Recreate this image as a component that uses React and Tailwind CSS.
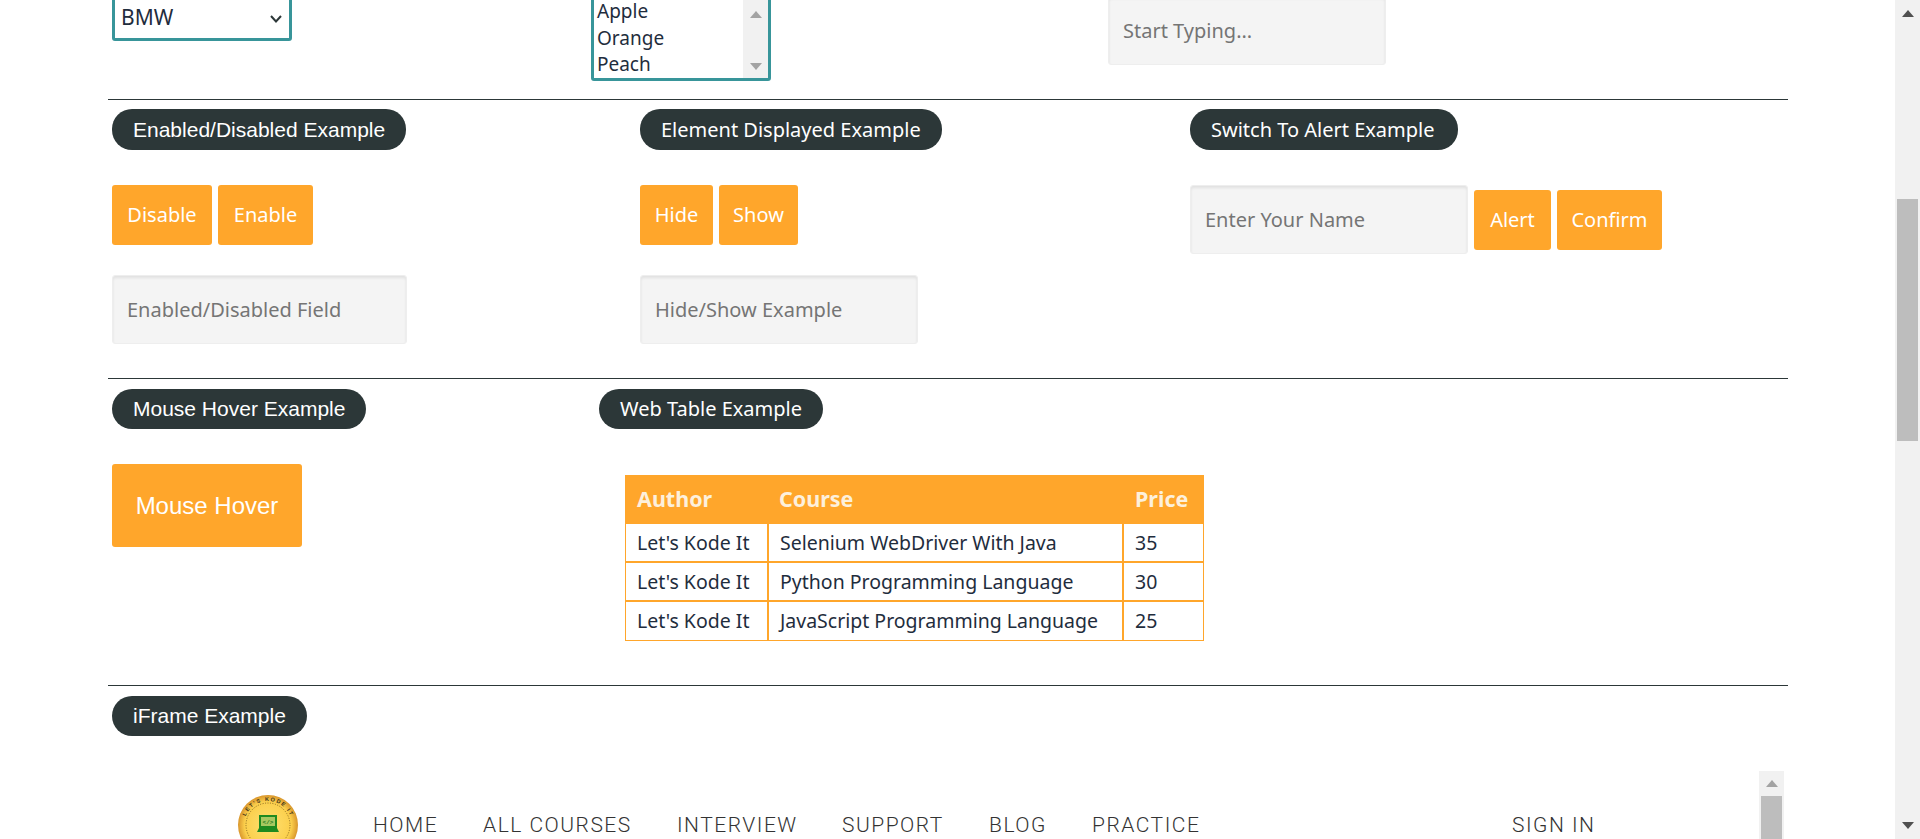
const TREBUCHET = "font-['Noto_Sans',sans-serif]";
const ARIAL = "font-['Liberation_Sans',sans-serif]";

function Arrow({ up, className }) {
    return (
        <svg width="12" height="7" viewBox="0 0 12 7" className={className}>
            <path d={up ? "M0 7 L6 0 L12 7 Z" : "M0 0 L6 7 L12 0 Z"} fill="currentColor" />
        </svg>
    );
}

function Pill({ children, className = "", arial }) {
    return (
        <div
            className={`flex items-center whitespace-nowrap rounded-[20px] bg-[#2c3738] text-white pl-[21px] ${arial ? `${ARIAL} text-[21px]` : `${TREBUCHET} text-[20px]`} ${className}`}
        >
            {children}
        </div>
    );
}

function OrangeButton({ children, className = "" }) {
    return (
        <button className={`h-[60px] rounded-[3px] bg-[#ffa62b] text-white text-[20px] ${TREBUCHET} ${className}`}>
            {children}
        </button>
    );
}

function Field({ placeholder, className = "" }) {
    return (
        <input
            placeholder={placeholder}
            className={`h-[69px] rounded-[3px] border border-[#eeeeee] bg-[#f4f4f4] px-[14px] text-[20px] placeholder:text-[#757575] shadow-[inset_0_2px_3px_rgba(0,0,0,0.08)] ${TREBUCHET} ${className}`}
        />
    );
}

function Rule() {
    return <hr className="border-0 h-px bg-[#2c3738]" />;
}

const courses = [
    ["Let's Kode It", "Selenium WebDriver With Java", "35"],
    ["Let's Kode It", "Python Programming Language", "30"],
    ["Let's Kode It", "JavaScript Programming Language", "25"],
];

function Logo() {
    return (
        <svg width="60" height="60" viewBox="0 0 60 60">
            <defs>
                <radialGradient id="coin">
                    <stop offset="0%" stopColor="#ffe070" />
                    <stop offset="78%" stopColor="#fbcf4c" />
                    <stop offset="100%" stopColor="#d9962c" />
                </radialGradient>
                <path id="ring" d="M6 30 A24 24 0 0 1 54 30" />
            </defs>
            <circle cx="30" cy="30" r="30" fill="url(#coin)" />
            <circle cx="30" cy="30" r="22" fill="none" stroke="#8a6a20" strokeWidth="1" strokeDasharray="1 1.5" />
            <text fontSize="5.5" fontWeight="700" fill="#3a3018" letterSpacing="1.4" fontFamily="Liberation Sans, sans-serif">
                <textPath href="#ring" startOffset="12%">LET'S KODE IT</textPath>
            </text>
            <rect x="21" y="20" width="18" height="13" fill="#1f8a1f" />
            <rect x="23" y="22" width="14" height="9" fill="#a8c860" />
            <text x="30" y="29" fontSize="6" fontWeight="700" fill="#1f7a1f" textAnchor="middle" fontFamily="Liberation Mono, monospace">&lt;/&gt;</text>
            <path d="M19 37 L21 33 H39 L41 37 Z" fill="#1f8a1f" />
        </svg>
    );
}

const navItems = [
    ["HOME", "w-[110px]"],
    ["ALL COURSES", "w-[194px]"],
    ["INTERVIEW", "w-[165px]"],
    ["SUPPORT", "w-[147px]"],
    ["BLOG", "w-[103px]"],
    ["PRACTICE", "w-[420px]"],
    ["SIGN IN", ""],
];

export default function App() {
    return (
        <div className="flex h-[839px] overflow-hidden bg-white text-[#1f2d3d]">
            <main className="flex-1 min-w-0">
                <div className="ml-[108px] w-[1680px]">
                    {/* Dropdown row, scrolled partly out of view */}
                    <div className={`-mt-[12px] h-[111px] flex items-start px-[4px] ${TREBUCHET}`}>
                        <div className="w-[479px]">
                            <div className="relative w-[180px]">
                                <select className="block w-full h-[53px] appearance-none rounded-[3px] border-[3px] border-[#38959a] pl-[6px] pt-[6px] text-[21px] bg-white">
                                    <option>BMW</option>
                                </select>
                                <svg width="12" height="8" viewBox="0 0 12 8" className="absolute left-[158px] top-[27px] text-[#2c3738] pointer-events-none">
                                    <path d="M1 1 L6 6.5 L11 1" fill="none" stroke="currentColor" strokeWidth="2" />
                                </svg>
                            </div>
                        </div>
                        <div className="w-[517px]">
                            <div className="flex w-[180px] h-[93px] rounded-[3px] border-[3px] border-[#38959a] text-[19px] leading-[22px]">
                                <ul className="flex-1 pl-[3px] pt-[9px] flex flex-col gap-[4.5px]">
                                    <li>Apple</li>
                                    <li>Orange</li>
                                    <li>Peach</li>
                                </ul>
                                <div className="w-[25px] bg-[#f1f1f1] flex flex-col items-center justify-between text-[#a3a3a3] pt-[20px] pb-[8px]">
                                    <Arrow up />
                                    <Arrow />
                                </div>
                            </div>
                        </div>
                        <Field placeholder="Start Typing..." className="w-[278px] mt-[8px]" />
                    </div>
                    <Rule />

                    {/* Enabled / displayed / alert */}
                    <div className="h-[278px] flex px-[4px] pt-[9px]">
                        <div className="w-[528px]">
                            <Pill arial className="w-[294px] h-[41px]">Enabled/Disabled Example</Pill>
                            <div className="flex gap-[6px] mt-[35px]">
                                <OrangeButton className="w-[100px]">Disable</OrangeButton>
                                <OrangeButton className="w-[95px]">Enable</OrangeButton>
                            </div>
                            <Field placeholder="Enabled/Disabled Field" className="block w-[295px] mt-[30px]" />
                        </div>
                        <div className="w-[550px]">
                            <Pill className="w-[302px] h-[41px]">Element Displayed Example</Pill>
                            <div className="flex gap-[6px] mt-[35px]">
                                <OrangeButton className="w-[73px]">Hide</OrangeButton>
                                <OrangeButton className="w-[79px]">Show</OrangeButton>
                            </div>
                            <Field placeholder="Hide/Show Example" className="block w-[278px] mt-[30px]" />
                        </div>
                        <div>
                            <Pill className="w-[268px] h-[41px]">Switch To Alert Example</Pill>
                            <div className="flex items-center gap-[6px] mt-[35px]">
                                <Field placeholder="Enter Your Name" className="w-[278px]" />
                                <OrangeButton className="w-[77px]">Alert</OrangeButton>
                                <OrangeButton className="w-[105px]">Confirm</OrangeButton>
                            </div>
                        </div>
                    </div>
                    <Rule />

                    {/* Hover and table */}
                    <div className="h-[306px] flex px-[4px] pt-[10px]">
                        <div className="w-[487px]">
                            <Pill arial className="w-[254px] h-[40px]">Mouse Hover Example</Pill>
                            <button className={`block w-[190px] h-[83px] mt-[35px] rounded-[3px] bg-[#ffa62b] text-white text-[24px] ${ARIAL}`}>
                                Mouse Hover
                            </button>
                        </div>
                        <div>
                            <Pill className="w-[224px] h-[40px]">Web Table Example</Pill>
                            <table className={`ml-[26px] mt-[46px] w-[579px] table-fixed border-separate border-spacing-0 text-[19.5px] ${TREBUCHET}`}>
                                <thead>
                                    <tr className="h-[48px] bg-[#ffa62b] text-[#fdf0dc] text-[21.5px] font-bold text-left">
                                        <th className="w-[143px] pl-[12px]">Author</th>
                                        <th className="w-[355px] pl-[11px]">Course</th>
                                        <th className="pl-[12px]">Price</th>
                                    </tr>
                                </thead>
                                <tbody>
                                    {courses.map((row, idx) => (
                                        <tr key={idx} className={idx === 2 ? "h-[40px]" : "h-[39px]"}>
                                            {row.map((cell, i) => (
                                                <td key={i} className="border border-[#ffa62b] pl-[11px] whitespace-nowrap">
                                                    {cell}
                                                </td>
                                            ))}
                                        </tr>
                                    ))}
                                </tbody>
                            </table>
                        </div>
                    </div>
                    <Rule />

                    {/* iFrame */}
                    <div className="px-[4px] pt-[10px]">
                        <Pill arial className="w-[195px] h-[40px]">iFrame Example</Pill>
                    </div>
                    <div className="flex mt-[35px] h-[68px]">
                        <div className="flex-1 flex items-start pl-[130px] pt-[24px]">
                            <Logo />
                            <nav className="flex ml-[75px] mt-[15px] text-[21px] font-light tracking-[1.5px] font-['Roboto',sans-serif] text-[#333333]">
                                {navItems.map(([label, width]) => (
                                    <a key={label} className={width}>{label}</a>
                                ))}
                            </nav>
                        </div>
                        <div className="w-[25px] bg-[#f1f1f1] flex flex-col items-center text-[#a3a3a3] mr-[4px]">
                            <Arrow up className="mt-[9px]" />
                            <div className="w-[21px] flex-1 mt-[9px] bg-[#bdbdbd]" />
                        </div>
                    </div>
                </div>
            </main>

            {/* Page scrollbar */}
            <aside className="w-[25px] bg-[#f1f1f1] flex flex-col items-center text-[#505050]">
                <Arrow up className="mt-[10px]" />
                <div className="w-[21px] h-[242px] mt-[182px] bg-[#bdbdbd]" />
                <Arrow className="mt-auto mb-[10px]" />
            </aside>
        </div>
    );
}
